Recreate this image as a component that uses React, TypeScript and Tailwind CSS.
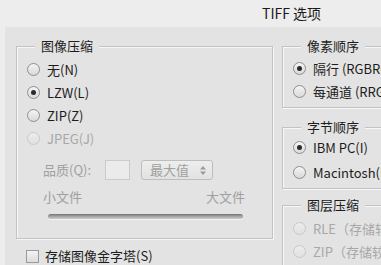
import React from "react";

const font = "font-['Noto_Sans_CJK_SC','Noto_Sans',sans-serif]";

function Radio({ checked = false, disabled = false }: { checked?: boolean; disabled?: boolean }) {
  return (
    <span
      className={`flex h-[13px] w-[13px] shrink-0 items-center justify-center rounded-full border ${
        disabled
          ? "border-[#c9c9c9] bg-gradient-to-b from-[#ececec] to-[#e0e0e0]"
          : "border-[#8e8e8e] bg-gradient-to-b from-[#f4f4f4] to-[#d9d9d9]"
      }`}
    >
      {checked && <span className="h-[5px] w-[5px] rounded-full bg-[#2a2a2a]" />}
    </span>
  );
}

function RadioRow({
  label,
  checked,
  disabled,
  h = "h-[23px]",
}: {
  label: string;
  checked?: boolean;
  disabled?: boolean;
  h?: string;
}) {
  return (
    <div className={`flex ${h} items-center gap-[7px] whitespace-nowrap`}>
      <Radio checked={checked} disabled={disabled} />
      <span className={disabled ? "text-[#a8a8a8]" : "text-[#1c1c1c]"}>{label}</span>
    </div>
  );
}

function Group({
  title,
  className,
  children,
}: {
  title: string;
  className?: string;
  children: React.ReactNode;
}) {
  return (
    <div
      className={`relative shrink-0 border border-[#c3c3c3] shadow-[inset_1px_1px_0_#f7f7f7,1px_1px_0_#f7f7f7] ${className ?? ""}`}
    >
      <span className="absolute left-[18px] top-[-10px] bg-[#e3e3e3] px-[6px] leading-[18px] text-[#1c1c1c]">
        {title}
      </span>
      {children}
    </div>
  );
}

export default function App() {
  return (
    <div className={`h-[265px] w-[381px] overflow-hidden bg-[#ededed] text-[13px] ${font}`}>
      <div className="flex h-[27px] items-center pl-[262px] text-[14px] text-[#1a1a1a]">TIFF 选项</div>
      <div className="flex h-[238px] border-l-[5px] border-[#ededed] bg-[#e3e3e3] pl-[11px] pt-[19px]">
        <div className="flex w-[257px] shrink-0 flex-col">
          <Group title="图像压缩" className="h-[193px] w-[257px]">
            <div className="flex flex-col pl-[10px] pt-[11px]">
              <RadioRow label="无(N)" />
              <RadioRow label="LZW(L)" checked />
              <RadioRow label="ZIP(Z)" />
              <RadioRow label="JPEG(J)" disabled />
            </div>
            <div className="ml-[26px] mt-[10px] flex h-[20px] items-center text-[#a0a0a0]">
              <span className="w-[62px]">品质(Q):</span>
              <span className="h-[20px] w-[25px] border border-[#cbcbcb] bg-[#ebebeb]" />
              <span className="ml-[11px] flex h-[20px] w-[72px] items-center justify-between rounded-[3px] border border-[#bdbdbd] bg-gradient-to-b from-[#eeeeee] to-[#e2e2e2] pl-[8px] pr-[6px]">
                <span>最大值</span>
                <svg width="6" height="9" viewBox="0 0 6 9">
                  <path d="M3 0 L6 3.5 H0 Z M3 9 L6 5.5 H0 Z" fill="#9a9a9a" />
                </svg>
              </span>
            </div>
            <div className="ml-[26px] mr-[27px] mt-[7px] flex h-[20px] items-center justify-between text-[#a0a0a0]">
              <span>小文件</span>
              <span>大文件</span>
            </div>
            <div className="ml-[31px] mt-[7px] h-[5px] w-[195px] rounded-full bg-gradient-to-b from-[#747474] via-[#a6a6a6] to-[#cdcdcd] shadow-[0_1px_0_#f2f2f2]" />
          </Group>
          <div className="ml-[10px] mt-[9px] flex h-[16px] shrink-0 items-center gap-[6px] whitespace-nowrap leading-[16px] text-[#1c1c1c]">
            <span className="h-[13px] w-[13px] border border-[#9a9a9a] bg-gradient-to-b from-[#f3f3f3] to-[#dcdcdc]" />
            <span>存储图像金字塔(S)</span>
          </div>
        </div>
        <div className="ml-[9px] flex w-[140px] shrink-0 flex-col">
          <Group title="像素顺序" className="h-[62px] w-[140px]">
            <div className="flex flex-col pl-[10px] pt-[10px]">
              <RadioRow label="隔行 (RGBRGB)" checked />
              <RadioRow label="每通道 (RRGGBB)" />
            </div>
          </Group>
          <Group title="字节顺序" className="mt-[19px] h-[62px] w-[140px]">
            <div className="flex flex-col pl-[10px] pt-[7px]">
              <RadioRow label="IBM PC(I)" checked h="h-[25px]" />
              <RadioRow label="Macintosh(M)" h="h-[25px]" />
            </div>
          </Group>
          <Group title="图层压缩" className="mt-[16px] h-[80px] w-[140px]">
            <div className="flex flex-col pl-[10px] pt-[11px]">
              <RadioRow label="RLE（存储较快，文件较大）" disabled />
              <RadioRow label="ZIP（存储较慢，文件较小）" disabled />
            </div>
          </Group>
        </div>
      </div>
    </div>
  );
}
